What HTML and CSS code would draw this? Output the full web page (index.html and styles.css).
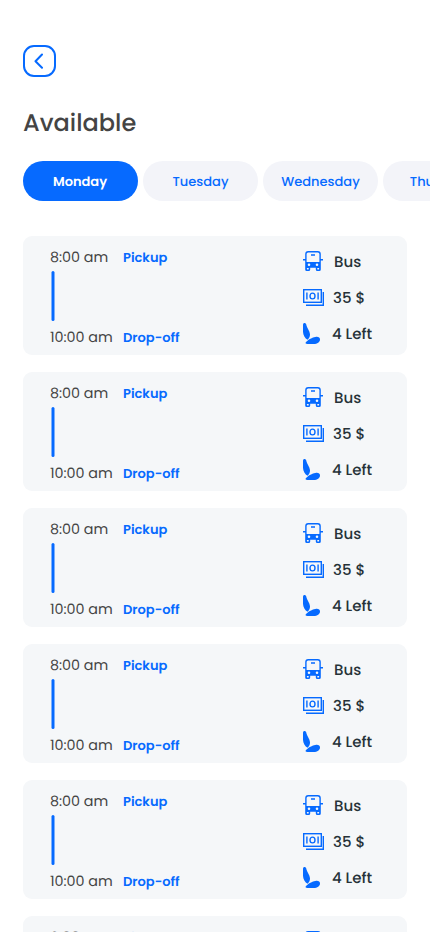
FILE: index.html
```html
<!DOCTYPE html>
<html lang="en">
<head>
<meta charset="utf-8">
<meta name="viewport" content="width=device-width, initial-scale=1">
<title>Available</title>
<link rel="stylesheet" href="styles.css">
</head>
<body>
<svg class="sprite" aria-hidden="true">
  <symbol id="bus" viewBox="0 0 20 20">
    <path fill="currentColor" fill-rule="evenodd" d="M5.200 0h9.600a3 3 0 0 1 3 3V8H20v1.500h-2.200v8.900A1.600 1.600 0 0 1 16.200 20h-1.800a1.600 1.600 0 0 1-1.600-1.600v-1.600H7.200v1.600A1.600 1.600 0 0 1 5.600 20H3.800a1.600 1.600 0 0 1-1.600-1.600V9.500H0V8h2.200V3A3 3 0 0 1 5.200 0zM5.200 1.400a1.600 1.600 0 0 0-1.600 1.600v8h12.800V3a1.600 1.600 0 0 0-1.600-1.600zM8 3.300h4v1.500H8zM6 12.500a1.300 1.300 0 1 0 0 2.600 1.300 1.300 0 0 0 0-2.600zM14 12.500a1.300 1.300 0 1 0 0 2.600 1.300 1.300 0 0 0 0-2.600zM3.900 17v1.100q0 .5.500.5h.8q.5 0 .5-.5V17zM14.300 17v1.100q0 .5.500.5h.8q.5 0 .5-.5V17z"/>
  </symbol>
  <symbol id="cash" viewBox="0 0 21 17">
    <g fill="none" stroke="currentColor" stroke-width="1.400">
      <rect x=".7" y=".7" width="17.600" height="12.600"/>
      <path d="M20.300 3v13.300H3M3.900 3.500v7M15.100 3.500v7"/>
      <ellipse cx="9.500" cy="7" rx="2.500" ry="2.900"/>
    </g>
  </symbol>
  <symbol id="seat" viewBox="0 0 17 21">
    <path fill="currentColor" d="M0 2C0 .6.700 0 1.600 0c1.200 0 1.700 1 1.900 2.600.3 2.300 3.300 5.300 3.500 8.700.1 2.200-.7 3.700-2.400 5.500C2 15.500.1 12.200 0 8.800zM3 19c1.500-1.800 5.500-4.500 9.400-5.100 3-.5 4.600.7 4.600 2.600 0 2.700-2.600 4.500-6.400 4.500H4.400C2.800 21 2 20.200 3 19z"/>
  </symbol>
</svg>
<main class="screen">
  <button class="back" aria-label="Back"><svg viewBox="0 0 10 16"><path d="M8 1.500 1.500 8.200l6.500 6.500"/></svg></button>
  <h1>Available</h1>
  <nav class="days">
    <button class="day active"><span>Monday</span></button>
    <button class="day"><span>Tuesday</span></button>
    <button class="day"><span>Wednesday</span></button>
    <button class="day"><span>Thursday</span></button>
  </nav>
  <section class="trips">
    <article class="trip">
      <div class="route"><p><time>8:00 am</time><b>Pickup</b></p><i class="line"></i><p><time>10:00 am</time><b>Drop-off</b></p></div>
      <ul class="info"><li class="bus"><svg><use href="#bus"/></svg><span>Bus</span></li><li class="cash"><svg><use href="#cash"/></svg><span>35 $</span></li><li class="seat"><svg><use href="#seat"/></svg><span>4 Left</span></li></ul>
    </article>
    <article class="trip">
      <div class="route"><p><time>8:00 am</time><b>Pickup</b></p><i class="line"></i><p><time>10:00 am</time><b>Drop-off</b></p></div>
      <ul class="info"><li class="bus"><svg><use href="#bus"/></svg><span>Bus</span></li><li class="cash"><svg><use href="#cash"/></svg><span>35 $</span></li><li class="seat"><svg><use href="#seat"/></svg><span>4 Left</span></li></ul>
    </article>
    <article class="trip">
      <div class="route"><p><time>8:00 am</time><b>Pickup</b></p><i class="line"></i><p><time>10:00 am</time><b>Drop-off</b></p></div>
      <ul class="info"><li class="bus"><svg><use href="#bus"/></svg><span>Bus</span></li><li class="cash"><svg><use href="#cash"/></svg><span>35 $</span></li><li class="seat"><svg><use href="#seat"/></svg><span>4 Left</span></li></ul>
    </article>
    <article class="trip">
      <div class="route"><p><time>8:00 am</time><b>Pickup</b></p><i class="line"></i><p><time>10:00 am</time><b>Drop-off</b></p></div>
      <ul class="info"><li class="bus"><svg><use href="#bus"/></svg><span>Bus</span></li><li class="cash"><svg><use href="#cash"/></svg><span>35 $</span></li><li class="seat"><svg><use href="#seat"/></svg><span>4 Left</span></li></ul>
    </article>
    <article class="trip">
      <div class="route"><p><time>8:00 am</time><b>Pickup</b></p><i class="line"></i><p><time>10:00 am</time><b>Drop-off</b></p></div>
      <ul class="info"><li class="bus"><svg><use href="#bus"/></svg><span>Bus</span></li><li class="cash"><svg><use href="#cash"/></svg><span>35 $</span></li><li class="seat"><svg><use href="#seat"/></svg><span>4 Left</span></li></ul>
    </article>
    <article class="trip">
      <div class="route"><p><time>8:00 am</time><b>Pickup</b></p><i class="line"></i><p><time>10:00 am</time><b>Drop-off</b></p></div>
      <ul class="info"><li class="bus"><svg><use href="#bus"/></svg><span>Bus</span></li><li class="cash"><svg><use href="#cash"/></svg><span>35 $</span></li><li class="seat"><svg><use href="#seat"/></svg><span>4 Left</span></li></ul>
    </article>
  </section>
</main>
</body>
</html>
```
FILE: styles.css
```css
* { box-sizing: border-box; margin: 0; padding: 0; }
body { background: #fff; font-family: Poppins, Inter, sans-serif; color: #444; text-rendering: geometricPrecision; }
button { font: inherit; border: 0; text-rendering: inherit; }
.sprite { display: none; }
.screen { height: 932px; overflow: hidden; padding: 45px 23px 0; }
.back { display: flex; align-items: center; justify-content: center; width: 33px; height: 32px; padding-right: 1px; border: 2px solid #066aff; border-radius: 11px; background: #fff; }
.back svg { width: 10px; height: 16px; fill: none; stroke: #066aff; stroke-width: 2; stroke-linecap: round; stroke-linejoin: round; }
h1 { margin-top: 29px; height: 36px; font-size: 24px; line-height: 36px; font-weight: 500; white-space: nowrap; }
.days { display: flex; gap: 5px; margin-top: 19px; margin-right: -23px; overflow: hidden; }
.day { flex: 0 0 115px; height: 40px; padding-top: 1px; border-radius: 20px; background: #f3f4f9; color: #066aff; font-size: 13px; font-weight: 500; line-height: 39px; }
.day.active { padding-right: 1px; background: #066aff; color: #fff; font-weight: 600; }
.trips { display: grid; gap: 17px; margin-top: 35px; }
.trip { display: flex; justify-content: space-between; height: 119px; padding: 10px 28px 0 27px; border-radius: 9px; background: #f5f7f9; }
.route p { display: flex; height: 22px; line-height: 22px; align-items: center; white-space: nowrap; }
.route time { width: 73px; padding-top: 2px; font-size: 14.3px; font-weight: 400; }
.route b { padding-top: 1px; color: #066aff; font-size: 13px; font-weight: 600; }
.line { display: block; width: 3px; height: 50px; margin: 3px 0 5px 1px; border-radius: 2px; background: #066aff; transform: translateX(.5px); }
.info { list-style: none; width: 76px; padding-top: 3px; display: grid; grid-template-rows: repeat(3, 24px); row-gap: 12px; align-content: start; }
.info li { display: flex; align-items: center; color: #263238; font-size: 15px; font-weight: 500; line-height: 24px; white-space: nowrap; }
.info span { line-height: 22px; padding-top: 3px; }
.info svg { flex: none; color: #066aff; }
.bus svg { width: 20px; height: 20px; margin-right: 11px; }
.cash svg { width: 21px; height: 17px; margin-right: 9px; }
.seat svg { width: 17px; height: 21px; margin-right: 12px; }
```
